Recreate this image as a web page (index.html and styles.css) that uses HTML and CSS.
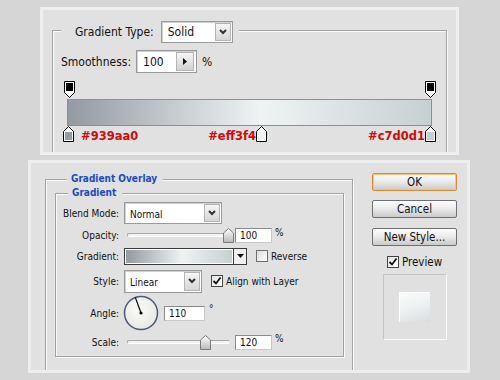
FILE: index.html
```html
<!DOCTYPE html>
<html>
<head>
<meta charset="utf-8">
<link rel="stylesheet" href="styles.css">
</head>
<body>
<div class="top-panel">
  <fieldset class="grad-set">
    <legend class="grad-legend">
      <span class="lbl-lg type-lbl">Gradient Type:</span>
      <span class="select sel-type"><span class="sel-text">Solid</span><span class="sel-btn"><svg width="8" height="6" viewBox="0 0 8 6"><polyline points="1,1 4,4 7,1" fill="none" stroke="#333" stroke-width="2"/></svg></span></span>
    </legend>
    <div class="smooth-row">
      <span class="lbl-lg">Smoothness:</span>
      <span class="num-big"><span class="num-text">100</span><span class="arrow-btn"><svg width="4" height="7" viewBox="0 0 4 7"><path d="M0 0L4 3.5L0 7Z" fill="#111"/></svg></span></span>
      <span class="lbl-lg pct">%</span>
    </div>
    <div class="editor">
      <div class="top-stops">
        <svg class="stop-top" width="11" height="18" viewBox="0 0 11 18"><path d="M0.5 0.5H10.5V11.5L5.5 16.5L0.5 11.5Z" fill="#fff" stroke="#000"/><rect x="2" y="2" width="7" height="8" fill="#000"/></svg>
        <svg class="stop-top" width="11" height="18" viewBox="0 0 11 18"><path d="M0.5 0.5H10.5V11.5L5.5 16.5L0.5 11.5Z" fill="#fff" stroke="#000"/><rect x="2" y="2" width="7" height="8" fill="#000"/></svg>
      </div>
      <div class="grad-bar"></div>
      <div class="bottom-stops">
        <svg width="12" height="16" viewBox="0 0 12 16"><path d="M5.5 0.5L10.5 5.5V15.5H0.5V5.5Z" fill="#fff" stroke="#000"/><rect x="2" y="6" width="7" height="8" fill="#939aa0"/></svg>
        <span class="hex hex1">#939aa0</span>
        <span class="hex hex2">#eff3f4</span>
        <svg width="12" height="16" viewBox="0 0 12 16"><path d="M5.5 0.5L10.5 5.5V15.5H0.5V5.5Z" fill="#fff" stroke="#000"/><rect x="2" y="6" width="7" height="8" fill="#eff3f4"/></svg>
        <span class="hex hex3">#c7d0d1</span>
        <svg width="12" height="16" viewBox="0 0 12 16"><path d="M5.5 0.5L10.5 5.5V15.5H0.5V5.5Z" fill="#fff" stroke="#000"/><rect x="2" y="6" width="7" height="8" fill="#c7d0d1"/></svg>
      </div>
    </div>
  </fieldset>
</div>

<div class="bottom-panel">
  <fieldset class="overlay-set">
    <legend class="blue-legend">Gradient Overlay</legend>
    <fieldset class="gradient-set">
      <legend class="blue-legend">Gradient</legend>
      <div class="form-grid">
        <span class="lbl">Blend Mode:</span>
        <div class="ctl">
          <span class="select sel-blend"><span class="sel-text small">Normal</span><span class="sel-btn"><svg width="8" height="6" viewBox="0 0 8 6"><polyline points="1,1 4,4 7,1" fill="none" stroke="#333" stroke-width="2"/></svg></span></span>
        </div>

        <span class="lbl">Opacity:</span>
        <div class="ctl">
          <span class="slider"><span class="track"></span><svg class="thumb" style="left:99px" width="11" height="15" viewBox="0 0 11 15"><defs><linearGradient id="tg1" x1="0" y1="0" x2="0" y2="1"><stop offset="0" stop-color="#ffffff"/><stop offset="1" stop-color="#b9b9b9"/></linearGradient></defs><path d="M5.5 0.5L10.5 5V14.5H0.5V5Z" fill="url(#tg1)" stroke="#7a7a7a"/></svg></span>
          <span class="num-sm">100</span>
          <span class="unit">%</span>
        </div>

        <span class="lbl">Gradient:</span>
        <div class="ctl">
          <span class="grad-pick"><span class="grad-fill"></span><span class="grad-drop"><svg width="7" height="4" viewBox="0 0 7 4"><path d="M0 0H7L3.5 4Z" fill="#111"/></svg></span></span>
          <span class="check"></span>
          <span class="chk-lbl">Reverse</span>
        </div>

        <span class="lbl">Style:</span>
        <div class="ctl">
          <span class="select sel-style"><span class="sel-text small">Linear</span><span class="sel-btn"><svg width="8" height="6" viewBox="0 0 8 6"><polyline points="1,1 4,4 7,1" fill="none" stroke="#333" stroke-width="2"/></svg></span></span>
          <span class="check on"><svg width="10" height="10" viewBox="0 0 10 10"><polyline points="1.5,5 4,7.5 8.5,1.5" fill="none" stroke="#111" stroke-width="1.8"/></svg></span>
          <span class="chk-lbl">Align with Layer</span>
        </div>

        <span class="lbl">Angle:</span>
        <div class="ctl">
          <svg class="dial" width="36" height="36" viewBox="0 0 36 36"><defs><radialGradient id="dg" cx="0.45" cy="0.4" r="0.7"><stop offset="0" stop-color="#fbfbf9"/><stop offset="1" stop-color="#e4e4e0"/></radialGradient></defs><circle cx="18" cy="18" r="16.5" fill="url(#dg)" stroke="#4b5878" stroke-width="1.5"/><line x1="18" y1="18" x2="12.4" y2="2.6" stroke="#000" stroke-width="1.2"/><circle cx="18" cy="18" r="1.6" fill="#000"/></svg>
          <span class="num-sm angle-in">110</span>
          <span class="unit deg">°</span>
        </div>

        <span class="lbl">Scale:</span>
        <div class="ctl">
          <span class="slider"><span class="track"></span><svg class="thumb" style="left:76px" width="11" height="15" viewBox="0 0 11 15"><defs><linearGradient id="tg2" x1="0" y1="0" x2="0" y2="1"><stop offset="0" stop-color="#ffffff"/><stop offset="1" stop-color="#b9b9b9"/></linearGradient></defs><path d="M5.5 0.5L10.5 5V14.5H0.5V5Z" fill="url(#tg2)" stroke="#7a7a7a"/></svg></span>
          <span class="num-sm">120</span>
          <span class="unit">%</span>
        </div>
      </div>
    </fieldset>
  </fieldset>

  <div class="side">
    <span class="btn ok">OK</span>
    <span class="btn cancel">Cancel</span>
    <span class="btn newstyle">New Style...</span>
    <div class="preview-row">
      <span class="check on"><svg width="10" height="10" viewBox="0 0 10 10"><polyline points="1.5,5 4,7.5 8.5,1.5" fill="none" stroke="#111" stroke-width="1.8"/></svg></span>
      <span class="prev-lbl">Preview</span>
    </div>
    <div class="preview-box"><div class="preview-swatch"></div></div>
  </div>
</div>
</body>
</html>
```

FILE: styles.css
```css
* { box-sizing: border-box; }
html, body { margin: 0; padding: 0; }
body {
  width: 500px;
  height: 380px;
  overflow: hidden;
  background: #d6d6d6;
  font-family: "DejaVu Sans Condensed", "Liberation Sans", sans-serif;
  color: #111;
}

/* ---------- top panel ---------- */
.top-panel {
  margin: 7px 0 0 40px;
  width: 419px;
  height: 148px;
  border: 3px solid #eeeeee;
  background: #e1e1e1;
  overflow: hidden;
}
.grad-set {
  margin: 11px 0 0 9px;
  width: 395px;
  height: 160px;
  min-width: 0;
  padding: 0;
  border: 1px solid #a3a3a3;
  box-shadow: inset 1px 1px 0 #fafafa, 1px 1px 0 #fafafa;
}
.grad-legend {
  margin-left: 8px;
  padding: 0 6px 0 14px;
  display: flex;
  align-items: flex-start;
  height: 18px;
  background: #e1e1e1;
}
.lbl-lg { font-size: 12px; line-height: 22px; white-space: nowrap; }
.type-lbl { margin-right: 7px; }

.select {
  display: flex;
  align-items: stretch;
  background: #fff;
  border: 1px solid #9a9a9a;
  box-shadow: inset 1px 1px 0 #d0d0d0;
}
.sel-text { flex: 1; padding-left: 6px; font-size: 12px; display: flex; align-items: center; }
.sel-text.small { font-size: 10px; padding-left: 5px; padding-top: 2px; }
.sel-btn {
  width: 16px;
  margin: 1px;
  border: 1px solid #b4b4b4;
  background: linear-gradient(#f6f6f6, #d6d6d6);
  display: flex;
  align-items: center;
  justify-content: center;
}
.sel-type { width: 72px; height: 22px; flex: none; }

.smooth-row {
  margin: 11px 0 0 8px;
  display: flex;
  align-items: center;
  height: 23px;
}
.smooth-row .lbl-lg:first-child { margin-right: 5px; }
.num-big {
  width: 61px;
  height: 23px;
  display: flex;
  align-items: center;
  background: #fff;
  border: 1px solid #9a9a9a;
  box-shadow: inset 1px 1px 0 #d0d0d0;
}
.num-text { font-size: 12px; padding-left: 6px; flex: 1; }
.arrow-btn {
  width: 18px;
  height: 19px;
  margin-right: 2px;
  border: 1px solid #b4b4b4;
  background: linear-gradient(#f6f6f6, #d2d2d2);
  display: flex;
  align-items: center;
  justify-content: center;
}
.pct { margin-left: 5px; }

.editor { margin: 8px 0 0 10px; width: 374px; }
.top-stops {
  display: flex;
  justify-content: space-between;
  padding: 0 1px;
  height: 18px;
}
.stop-top { display: block; }
.grad-bar {
  margin-left: 4px;
  width: 365px;
  height: 27px;
  border: 1px solid #8f8f8f;
  background: linear-gradient(to right, #939aa0 0%, #eff3f4 53%, #c7d0d1 100%);
}
.bottom-stops {
  display: flex;
  align-items: flex-end;
  height: 16px;
}
.bottom-stops svg { display: block; flex: none; }
.hex {
  display: flex;
  font-family: "DejaVu Sans", sans-serif;
  font-weight: bold;
  font-size: 11.5px;
  line-height: 13px;
  color: #d10a0a;
  white-space: nowrap;
  margin-bottom: -1px;
}
.hex1 { margin-left: 6px; width: 128px; }
.hex2 { width: 47px; justify-content: flex-end; }
.hex3 { width: 157px; justify-content: flex-end; }

/* ---------- bottom panel ---------- */
.bottom-panel {
  margin: 5px 0 0 28px;
  width: 442px;
  height: 213px;
  border: 3px solid #eeeeee;
  background: #e1e1e1;
  overflow: hidden;
  display: flex;
  align-items: flex-start;
}
.overlay-set {
  margin: 10px 0 0 14px;
  width: 308px;
  height: 230px;
  min-width: 0;
  padding: 0 8px 0 9px;
  border: 1px solid #a3a3a3;
  box-shadow: inset 1px 1px 0 #fafafa, 1px 1px 0 #fafafa;
  flex: none;
}
.blue-legend {
  margin-left: 12px;
  padding: 0 6px 0 4px;
  font-weight: bold;
  font-size: 10px;
  line-height: 12px;
  color: #1a4bc4;
  background: #e1e1e1;
}
.gradient-set {
  margin: 2px 0 0 0;
  width: 289px;
  min-width: 0;
  padding: 0 0 2px 0;
  border: 1px solid #a3a3a3;
  box-shadow: inset 1px 1px 0 #fafafa, 1px 1px 0 #fafafa;
}
.form-grid {
  display: grid;
  grid-template-columns: 63px 1fr;
  column-gap: 5px;
  grid-template-rows: 22px 22px 20px 30px 34px 24px;
  align-items: center;
  font-size: 10px;
  padding-top: 3px;
}
.lbl { text-align: right; white-space: nowrap; }
.ctl { display: flex; align-items: center; height: 100%; }

.sel-blend { width: 98px; height: 22px; }
.sel-style { width: 78px; height: 23px; }

.slider { position: relative; width: 108px; height: 16px; flex: none; }
.track {
  position: absolute;
  left: 3px;
  top: 6px;
  width: 103px;
  height: 4px;
  border: 1px solid;
  border-color: #a9a9a9 #e9e9e9 #ffffff #a9a9a9;
  border-radius: 2px;
  background: #f2f2ef;
}
.thumb { position: absolute; top: 1px; }

.num-sm {
  margin-left: 3px;
  width: 37px;
  height: 15px;
  background: #fff;
  border: 1px solid;
  border-color: #8a8a8a #c8c8c8 #c8c8c8 #8a8a8a;
  font-size: 10px;
  line-height: 13px;
  padding-left: 4px;
}
.unit { margin-left: 3px; align-self: flex-start; padding-top: 3px; }
.angle-in { margin-left: 5px; width: 41px; }
.deg { margin-left: 4px; padding-top: 7px; }

.grad-pick {
  width: 123px;
  height: 17px;
  border: 1px solid #3a3a3a;
  display: flex;
  background: #fff;
}
.grad-fill {
  flex: 1;
  margin: 1px;
  background: linear-gradient(to right, #939aa0 0%, #eff3f4 53%, #c7d0d1 100%);
}
.grad-drop {
  width: 13px;
  border-left: 1px solid #3a3a3a;
  background: #f0f0f0;
  display: flex;
  align-items: center;
  justify-content: center;
}

.check {
  width: 12px;
  height: 12px;
  flex: none;
  margin-left: 9px;
  border: 1px solid #6e6e6e;
  background: linear-gradient(135deg, #dcdcdc, #ffffff);
  display: flex;
  align-items: center;
  justify-content: center;
}
.check.on { border-color: #444; background: linear-gradient(135deg, #e4e4e4, #ffffff); }
.chk-lbl { margin-left: 3px; white-space: nowrap; }

.dial { display: block; flex: none; margin-left: -1px; }

/* ---------- side column ---------- */
.side {
  margin: 10px 0 0 19px;
  width: 85px;
  display: flex;
  flex-direction: column;
  align-items: center;
  flex: none;
}
.btn {
  width: 85px;
  height: 18px;
  display: flex;
  align-items: center;
  justify-content: center;
  font-size: 11.5px;
  border: 1px solid #6f6f6f;
  border-radius: 2px;
  background: linear-gradient(#fdfdfd, #ececec 45%, #cacaca);
}
.btn.ok { border-color: #d98a2a; box-shadow: inset 0 0 0 1px #f3c27e; }
.btn.cancel { margin-top: 9px; }
.btn.newstyle { margin-top: 10px; }
.preview-row { margin-top: 10px; display: flex; align-items: center; height: 12px; }
.preview-row .check { margin-left: 0; }
.prev-lbl { margin-left: 3px; font-size: 11.5px; }
.preview-box {
  margin-top: 6px;
  width: 64px;
  height: 66px;
  border: 1px solid;
  border-color: #c4c4c4 #fbfbfb #fbfbfb #c4c4c4;
  background: #e0e0e0;
  display: flex;
  align-items: center;
  justify-content: center;
}
.preview-swatch {
  width: 31px;
  height: 30px;
  background: linear-gradient(160deg, #fbfcfc 0%, #eef1f2 50%, #d6dcdf 100%);
  box-shadow: inset 1px 1px 0 #ffffff;
}
```
